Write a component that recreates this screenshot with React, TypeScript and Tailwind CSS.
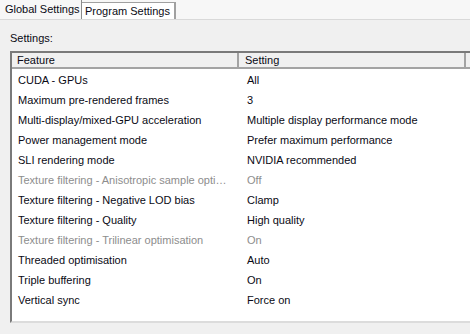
import React from 'react';

interface Row {
  feature: string;
  setting: string;
  disabled?: boolean;
}

const rows: Row[] = [
  { feature: 'CUDA - GPUs', setting: 'All' },
  { feature: 'Maximum pre-rendered frames', setting: '3' },
  { feature: 'Multi-display/mixed-GPU acceleration', setting: 'Multiple display performance mode' },
  { feature: 'Power management mode', setting: 'Prefer maximum performance' },
  { feature: 'SLI rendering mode', setting: 'NVIDIA recommended' },
  { feature: 'Texture filtering - Anisotropic sample opti…', setting: 'Off', disabled: true },
  { feature: 'Texture filtering - Negative LOD bias', setting: 'Clamp' },
  { feature: 'Texture filtering - Quality', setting: 'High quality' },
  { feature: 'Texture filtering - Trilinear optimisation', setting: 'On', disabled: true },
  { feature: 'Threaded optimisation', setting: 'Auto' },
  { feature: 'Triple buffering', setting: 'On' },
  { feature: 'Vertical sync', setting: 'Force on' },
];

export default function App() {
  return (
    <div className="w-[470px] h-[334px] overflow-hidden bg-[#f0f0f0] text-[11px] text-[#0a0a14] font-['Liberation_Sans',Arial,sans-serif] flex flex-col">
      {/* Tab strip */}
      <div className="h-[20px] shrink-0 flex items-end bg-[#f7f7f7] border-b border-[#d9d9d9]">
        <div className="h-[19px] w-[82px] pl-[5px] pt-[3px] leading-[13px] whitespace-nowrap bg-[#f7f7f7] border-r border-[#8c8c8c]">
          Global Settings
        </div>
        <div className="h-[17px] w-[94px] pl-[3px] pt-[2px] leading-[13px] whitespace-nowrap bg-white border-r-2 border-t border-[#a0a0a0]">
          Program Settings
        </div>
      </div>

      {/* Panel */}
      <div className="flex-1 flex flex-col pl-[10px]">
        <div className="h-[31px] shrink-0 pt-[11px] leading-[14px]">Settings:</div>
        <div className="h-[272px] shrink-0 w-[460px] bg-white border-l-2 border-t-2 border-[#7a7a7a] border-b-2 border-b-[#dcdcdc] flex flex-col">
          {/* Header */}
          <div className="h-[16px] shrink-0 flex bg-[#f0f0f0] border-b-2 border-[#a3a3a3] leading-[14px]">
            <div className="w-[227px] pl-[5px] border-r-2 border-[#a3a3a3]">Feature</div>
            <div className="w-[227px] pl-[6px] border-r-2 border-[#a3a3a3]">Setting</div>
          </div>
          <div className="pt-[1px] flex flex-col">
            {rows.map((r) => (
              <div
                key={r.feature}
                className={`h-[20px] flex items-center leading-[14px] ${r.disabled ? 'text-[#8d8d8d]' : ''}`}
              >
                <div className="w-[229px] pl-[6px] whitespace-nowrap overflow-hidden">{r.feature}</div>
                <div className="pl-[6px] whitespace-nowrap">{r.setting}</div>
              </div>
            ))}
          </div>
        </div>
      </div>
    </div>
  );
}
